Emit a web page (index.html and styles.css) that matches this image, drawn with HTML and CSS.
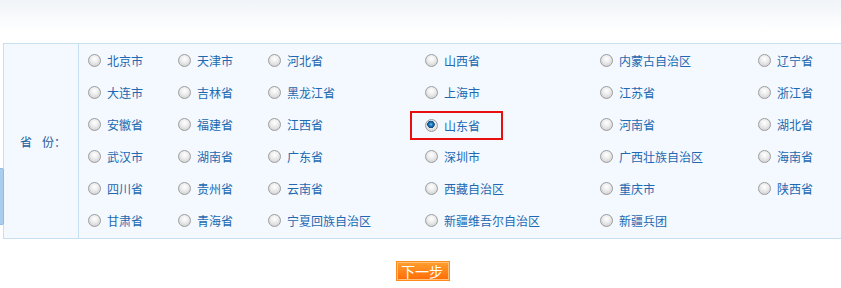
FILE: index.html
```html
<!DOCTYPE html>
<html lang="zh-CN">
<head>
    <meta charset="UTF-8">
    <title>选择省份</title>
    <link rel="stylesheet" href="styles.css">
</head>
<body>

    <div class="top-shade"></div>
    <div class="side-tab"></div>

    <!-- Province form -->
    <div class="form-wrap">
        <div class="prov-table">
            <div class="prov-label"><span>省</span><span>份：</span></div>
            <div class="prov-grid">
                <label class="opt"><input type="radio" name="prov"><span>北京市</span></label>
                <label class="opt"><input type="radio" name="prov"><span>天津市</span></label>
                <label class="opt"><input type="radio" name="prov"><span>河北省</span></label>
                <label class="opt"><input type="radio" name="prov"><span>山西省</span></label>
                <label class="opt"><input type="radio" name="prov"><span>内蒙古自治区</span></label>
                <label class="opt"><input type="radio" name="prov"><span>辽宁省</span></label>

                <label class="opt"><input type="radio" name="prov"><span>大连市</span></label>
                <label class="opt"><input type="radio" name="prov"><span>吉林省</span></label>
                <label class="opt"><input type="radio" name="prov"><span>黑龙江省</span></label>
                <label class="opt"><input type="radio" name="prov"><span>上海市</span></label>
                <label class="opt"><input type="radio" name="prov"><span>江苏省</span></label>
                <label class="opt"><input type="radio" name="prov"><span>浙江省</span></label>

                <label class="opt"><input type="radio" name="prov"><span>安徽省</span></label>
                <label class="opt"><input type="radio" name="prov"><span>福建省</span></label>
                <label class="opt"><input type="radio" name="prov"><span>江西省</span></label>
                <label class="opt picked"><input type="radio" name="prov" checked><span>山东省</span></label>
                <label class="opt"><input type="radio" name="prov"><span>河南省</span></label>
                <label class="opt"><input type="radio" name="prov"><span>湖北省</span></label>

                <label class="opt"><input type="radio" name="prov"><span>武汉市</span></label>
                <label class="opt"><input type="radio" name="prov"><span>湖南省</span></label>
                <label class="opt"><input type="radio" name="prov"><span>广东省</span></label>
                <label class="opt"><input type="radio" name="prov"><span>深圳市</span></label>
                <label class="opt"><input type="radio" name="prov"><span>广西壮族自治区</span></label>
                <label class="opt"><input type="radio" name="prov"><span>海南省</span></label>

                <label class="opt"><input type="radio" name="prov"><span>四川省</span></label>
                <label class="opt"><input type="radio" name="prov"><span>贵州省</span></label>
                <label class="opt"><input type="radio" name="prov"><span>云南省</span></label>
                <label class="opt"><input type="radio" name="prov"><span>西藏自治区</span></label>
                <label class="opt"><input type="radio" name="prov"><span>重庆市</span></label>
                <label class="opt"><input type="radio" name="prov"><span>陕西省</span></label>

                <label class="opt"><input type="radio" name="prov"><span>甘肃省</span></label>
                <label class="opt"><input type="radio" name="prov"><span>青海省</span></label>
                <label class="opt"><input type="radio" name="prov"><span>宁夏回族自治区</span></label>
                <label class="opt"><input type="radio" name="prov"><span>新疆维吾尔自治区</span></label>
                <label class="opt"><input type="radio" name="prov"><span>新疆兵团</span></label>
            </div>
        </div>

        <div class="actions">
            <button class="next-btn">下一步</button>
        </div>
    </div>

</body>
</html>
```

FILE: styles.css
```css
body {
    margin: 0;
    padding: 0;
    background: #fff;
    font-family: "Noto Sans CJK SC", "Microsoft YaHei", sans-serif;
    font-size: 12px;
    color: #2168b0;
    overflow: hidden;
    height: 288px;
    position: relative;
}

/* faint shade at the top of the frame */
.top-shade {
    height: 32px;
    background: linear-gradient(#f0f4f8, #ffffff);
}

/* half-hidden tab on the left edge */
.side-tab {
    position: absolute;
    left: -4px;
    top: 168px;
    width: 6px;
    height: 55px;
    background: #a9cdef;
    border: 1px solid #8fbbe6;
    border-radius: 2px;
}

.form-wrap {
    padding: 11px 0 0 3px;
}

/* Province table - runs on past the right edge of the frame */
.prov-table {
    display: flex;
    border: 1px solid #c6e0f2;
    border-right: none;
    background: #f3f9ff;
}

.prov-label {
    width: 75px;
    flex: none;
    border-right: 1px solid #c6e0f2;
    display: flex;
    align-items: center;
    padding-left: 16px;
    gap: 10px;
    color: #1f5c9e;
    box-sizing: border-box;
}

.prov-grid {
    flex: 1;
    display: grid;
    grid-template-columns: 90px 90px 157px 175px 158px 1fr;
    grid-auto-rows: 32px;
    padding: 0 0 2px 9px;
}

.opt {
    display: flex;
    align-items: center;
    gap: 6px;
    line-height: 14px;
    cursor: pointer;
    white-space: nowrap;
}

.opt span {
    padding-top: 1px;
}

/* selected province gets a red frame */
.opt.picked {
    justify-self: start;
    align-self: center;
    height: 25px;
    margin-left: -15px;
    margin-top: 3px;
    padding: 0 21px 0 13px;
    border: 2px solid #e8100f;
}

/* radio buttons */
.opt input {
    appearance: none;
    -webkit-appearance: none;
    margin: 0;
    width: 13px;
    height: 13px;
    border-radius: 50%;
    border: 1px solid #9c9c9c;
    background: radial-gradient(circle at 50% 35%, #ffffff 0, #f0f0f0 35%, #c9c9c9 100%);
    box-sizing: border-box;
    flex: none;
}

.opt input:checked {
    background:
        radial-gradient(circle at 45% 40%, #6fc0ee 0, #1c6fb0 2px, #0d4c86 3.5px, transparent 4px),
        radial-gradient(circle at 50% 35%, #ffffff 0, #f0f0f0 35%, #c9c9c9 100%);
}

/* Buttons */
.actions {
    padding: 22px 0 0 393px;
}

.next-btn {
    width: 54px;
    height: 20px;
    padding: 0 0 0 4px;
    text-align: left;
    overflow: hidden;
    white-space: nowrap;
    font-family: "Noto Sans CJK SC", "Microsoft YaHei", sans-serif;
    font-size: 14px;
    line-height: 16px;
    color: #fff;
    background: linear-gradient(#ffa030, #ff6a05);
    border: 1px solid #ff8a1c;
    box-shadow: inset 0 0 0 1px #ffc27a;
    cursor: pointer;
}
```
